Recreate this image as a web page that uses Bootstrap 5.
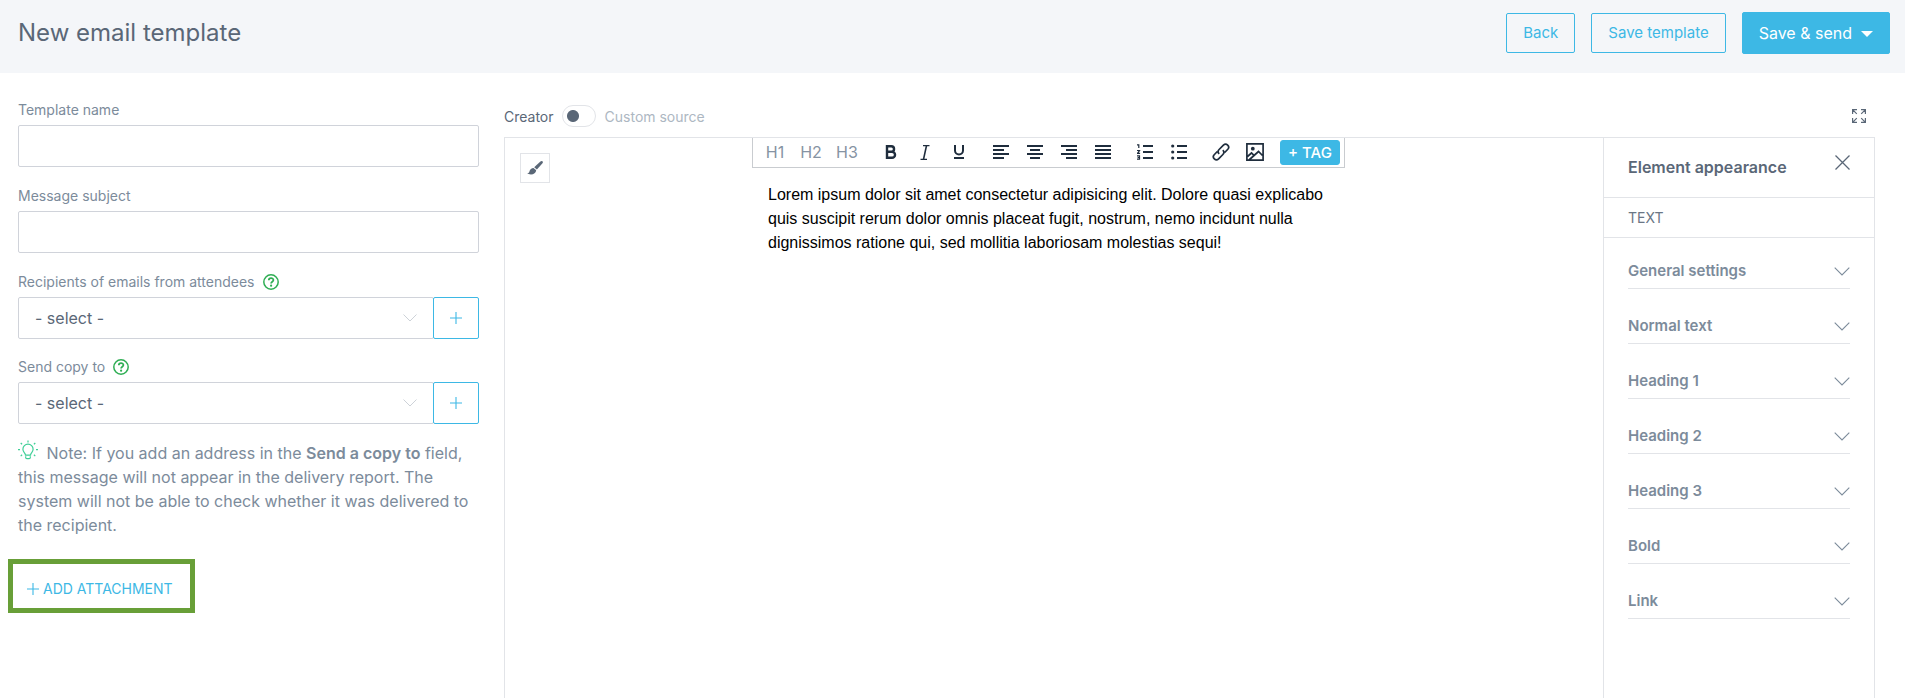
<!DOCTYPE html>
<html lang="en">
<head>
<meta charset="utf-8">
<meta name="viewport" content="width=device-width, initial-scale=1">
<title>New email template</title>
<link href="https://cdn.jsdelivr.net/npm/bootstrap@5.3.0/dist/css/bootstrap.min.css" rel="stylesheet">
<style>
:root { --blue: #3db8e5; --ink: #5a6777; --muted: #7c8b9b; --line: #e2e4e8; --field: #d0d3da; }
body { font-family: Inter, "Liberation Sans", sans-serif; font-size: 16px; line-height: 24px; color: var(--muted); background: #fff; }
svg { display: block; flex: none; }
.page-head { background: #f4f6f9; height: 73px; padding: 0 15px 7px 18px; }
.page-head h1 { font-size: 24px; line-height: 32px; color: var(--ink); font-weight: 400; }
.btn { --bs-btn-border-radius: 2px; --bs-btn-font-size: 15px; --bs-btn-line-height: 24px; --bs-btn-padding-y: 7px; --bs-btn-padding-x: 16px; }
.btn-line { --bs-btn-color: var(--blue); --bs-btn-border-color: var(--blue); --bs-btn-hover-color: #fff; --bs-btn-hover-bg: var(--blue); --bs-btn-hover-border-color: var(--blue); }
.btn-fill { --bs-btn-color: #fff; --bs-btn-bg: var(--blue); --bs-btn-border-color: var(--blue); --bs-btn-hover-color: #fff; --bs-btn-hover-bg: #2aa9d8; --bs-btn-padding-y: 8px; }
.btn-send { --bs-btn-font-size: 16px; }
.dropdown-toggle::after { border-width: 6px 6px 0; margin-left: 9px; vertical-align: 2px; }
.workspace { display: grid; grid-template-columns: minmax(0, 461fr) minmax(0, 1371fr); column-gap: 25px; padding: 25px 30px 0 18px; }
.field { margin-bottom: 17px; }
.field-select { margin-bottom: 16px; }
.form-label { font-size: 14px; line-height: 24px; margin-bottom: 3px; }
.form-control, .form-select { height: 42px; border-color: var(--field); border-radius: 2px; color: var(--ink); }
.form-select { padding: 0 36px 0 16px; background-size: 14px 8px; background-position: right 16px center;
  background-image: url("data:image/svg+xml,%3Csvg xmlns='http://www.w3.org/2000/svg' viewBox='0 0 14 8'%3E%3Cpath d='M.5.5 7 7 13.5.5' fill='none' stroke='%23cdd2d8'/%3E%3C/svg%3E"); }
.add-btn { width: 46px; flex: none; margin-left: -1px; --bs-btn-padding-x: 0px; --bs-btn-padding-y: 0px; }
.note { margin: 0 0 22px; }
.note svg { display: inline-block; vertical-align: -1px; margin-right: 4px; }
.note strong { font-weight: 600; }
.attach-frame { border: 5px solid #689f38; padding: 13px 17px 7px 14px; margin-left: -10px; vertical-align: top; }
.attach { color: var(--blue); font-size: 14px; }
.mode-bar { height: 39px; padding: 7px 9px 0 0; font-size: 14px; }
.mode-bar .form-check-input { width: 34px; height: 22px; margin: 0 9px 0 8px; border: 1px solid var(--line); border-radius: 11px; background: radial-gradient(circle at 10px 10px, var(--ink) 5.5px, transparent 6.5px) #fff; }
.creator { color: var(--ink); }
.custom-source { color: #adb7c2; }
.editor { border: 1px solid var(--line); border-bottom: 0; }
.canvas { padding-right: 11px; }
.brush { top: 15px; left: 15px; width: 30px; height: 30px; border: 1px solid var(--line); background: #fff; }
.mail { max-width: 593px; }
.tools { height: 30px; border: 1px solid #c9ccd0; border-top: 0; padding: 0 4px; }
.tools > div { margin-right: 8px; }
.tools button:not(.btn) { width: 34px; height: 28px; border: 0; background: none; padding: 0; color: #1f2d3d; }
.tools .heads { margin-right: 9px; }
.tools .heads button:not(.btn) { width: 36px; color: #8693a3; }
.tag-btn { --bs-btn-border-radius: 3px; --bs-btn-padding-y: 0px; --bs-btn-padding-x: 6px; --bs-btn-line-height: 23px; font-weight: 500; width: 60px; }
.mail p { font-family: "Liberation Sans", Arial, sans-serif; color: #000; padding: 15px 8px 0 16px; }
.side { width: 271px; border-left: 1px solid var(--line); flex: none; }
.side header { height: 60px; padding: 17px 24px 0; border-bottom: 1px solid var(--line); }
.side h2 { font-size: 16px; line-height: 24px; font-weight: 600; color: var(--ink); }
.kind { font-size: 14px; color: #6a7685; height: 40px; line-height: 40px; padding: 0 24px; border-bottom: 1px solid var(--line); }
.sections { padding: 12px 24px; }
.sections button { height: 55px; padding: 25px 0 5px; border: 0; border-bottom: 1px solid var(--line); border-radius: 0; background: none; color: var(--muted); font-size: 15px; font-weight: 600; line-height: 24px; }
.sections .sections-first { height: 39px; padding-top: 9px; }
</style>
</head>
<body>
<svg width="0" height="0" class="position-absolute" aria-hidden="true">
  <symbol id="help" viewBox="0 0 16 16"><circle cx="8" cy="8" r="7.2" fill="none" stroke="#2fae54" stroke-width="1.5"/><path d="M5.8 6.3C5.8 3.4 10.4 3.5 10.4 6.1 10.4 7.7 8.1 7.8 8.1 9.4" fill="none" stroke="#2fae54" stroke-width="1.8"/><circle cx="8.1" cy="11.7" r="1.1" fill="#2fae54"/></symbol>
  <symbol id="plus" viewBox="0 0 12 12"><path d="M0 6h12M6 0v12" fill="none" stroke="currentColor" stroke-width="1.1"/></symbol>
  <symbol id="chev" viewBox="0 0 16 9"><path d="M.7.7 8 8 15.3.7" fill="none" stroke="currentColor" stroke-width="1.1"/></symbol>
</svg>
<div class="d-flex flex-column min-vh-100">
  <header class="page-head d-flex align-items-center justify-content-between">
    <h1 class="m-0">New email template</h1>
    <div class="d-flex align-items-center gap-3">
      <a href="#" class="btn btn-line">Back</a>
      <button type="button" class="btn btn-line">Save template</button>
      <button type="button" class="btn btn-fill btn-send dropdown-toggle" data-bs-toggle="dropdown">Save &amp; send</button>
    </div>
  </header>

  <main class="workspace flex-grow-1">
    <form>
      <div class="field">
        <label class="form-label d-block" for="tpl">Template name</label>
        <input id="tpl" type="text" class="form-control">
      </div>
      <div class="field">
        <label class="form-label d-block" for="subject">Message subject</label>
        <input id="subject" type="text" class="form-control">
      </div>
      <div class="field-select">
        <label class="form-label d-flex align-items-center gap-2" for="recipients">Recipients of emails from attendees <svg width="16" height="16"><use href="#help"/></svg></label>
        <div class="d-flex">
          <select id="recipients" class="form-select"><option>- select -</option></select>
          <button type="button" class="btn btn-line add-btn d-flex align-items-center justify-content-center" aria-label="Add recipient"><svg width="12" height="12"><use href="#plus"/></svg></button>
        </div>
      </div>
      <div class="field-select">
        <label class="form-label d-flex align-items-center gap-2" for="copy">Send copy to <svg width="16" height="16"><use href="#help"/></svg></label>
        <div class="d-flex">
          <select id="copy" class="form-select"><option>- select -</option></select>
          <button type="button" class="btn btn-line add-btn d-flex align-items-center justify-content-center" aria-label="Add copy address"><svg width="12" height="12"><use href="#plus"/></svg></button>
        </div>
      </div>
      <p class="note"><svg width="20" height="20" viewBox="0 0 20 20" fill="none" stroke="#3fcf97" stroke-width="1.2"><path d="M7.5 15.2C7.5 12.7 4.9 12.3 4.9 9.3a5.1 5.1 0 0 1 10.2 0c0 3-2.6 3.4-2.6 5.9zM7.7 16.2v1.3c0 .8.5 1.2 1.1 1.2h2.4c.6 0 1.1-.4 1.1-1.2v-1.3M10 .4v2M0 9.6h2M18 9.6h2M2.7 3l1.4 1.3M17.3 3l-1.4 1.3M2.7 16.1l1.4-1.3M17.3 16.1l-1.4-1.3"/></svg> Note: If you add an address in the <strong>Send a copy to</strong> field, this message will not appear in the delivery report. The system will not be able to check whether it was delivered to the recipient.</p>
      <div class="attach-frame d-inline-block">
        <a href="#" class="attach d-flex align-items-center gap-1 text-decoration-none"><svg width="12" height="12"><use href="#plus"/></svg>ADD ATTACHMENT</a>
      </div>
    </form>

    <section class="d-flex flex-column">
      <div class="mode-bar d-flex align-items-start">
        <label for="mode" class="creator">Creator</label>
        <input id="mode" type="checkbox" class="form-check-input" role="switch">
        <label for="mode" class="custom-source">Custom source</label>
        <button type="button" class="border-0 bg-transparent p-0 ms-auto mt-1" aria-label="Full screen"><svg width="14" height="14" viewBox="0 0 14 14" fill="none" stroke="#5a6777" stroke-width="1.2"><path d="M.6 5V.6H5M9 .6h4.4V5M13.4 9v4.4H9M5 13.4H.6V9M.6.6l4.2 4.2M13.4.6 9.2 4.8M13.4 13.4 9.2 9.2M.6 13.4l4.2-4.2"/></svg></button>
      </div>
      <div class="editor d-flex flex-grow-1">
        <div class="canvas position-relative flex-grow-1">
          <button type="button" class="brush position-absolute p-0 d-flex align-items-center justify-content-center" aria-label="Page style"><svg width="16" height="14" viewBox="0 0 16 14" fill="#5a6777"><path d="M15.4.3c.7.6.6 1.4.1 2L9.9 8.5 7.2 6.3 13.4.6c.6-.5 1.4-.8 2-.3zM6.5 7 9.2 9.3C9 12 6.800 13.500 4 13.500 2.300 13.500.9 13 .2 12.300c1.300 0 2-.5 2.300-2C2.900 8.500 4.600 7 6.500 7z"/></svg></button>
          <div class="mail mx-auto">
            <div class="tools d-flex align-items-start" role="toolbar">
              <div class="heads d-flex"><button type="button">H1</button><button type="button">H2</button><button type="button">H3</button></div>
              <div class="d-flex">
                <button type="button" aria-label="Bold"><svg class="mx-auto" width="12" height="14" viewBox="0 0 12 14" fill="none" stroke="currentColor" stroke-width="2.400"><path d="M2 1.200h4.300a2.700 2.700 0 0 1 0 5.500H2zM2 6.700h5a3 3 0 0 1 0 6.100H2z"/></svg></button>
                <button type="button" aria-label="Italic"><svg class="mx-auto" width="10" height="15" viewBox="0 0 10 15" fill="none" stroke="currentColor"><path d="M3 .6h6.500M.5 14.400H7" stroke-width="1.100"/><path d="M6.500.6l-3 13.800" stroke-width="1.600"/></svg></button>
                <button type="button" aria-label="Underline"><svg class="mx-auto" width="12" height="14" viewBox="0 0 12 14" fill="none" stroke="currentColor" stroke-width="2"><path d="M2 0v5.500a4 4 0 0 0 8 0V0M1 13h10"/></svg></button>
              </div>
              <div class="d-flex">
                <button type="button" aria-label="Align left"><svg class="mx-auto" width="16" height="14" viewBox="0 0 16 14" stroke="currentColor" stroke-width="2"><path d="M0 1h16M0 5h11M0 9h16M0 13h11"/></svg></button>
                <button type="button" aria-label="Align centre"><svg class="mx-auto" width="16" height="14" viewBox="0 0 16 14" stroke="currentColor" stroke-width="2"><path d="M0 1h16M3 5h10M0 9h16M3 13h10"/></svg></button>
                <button type="button" aria-label="Align right"><svg class="mx-auto" width="16" height="14" viewBox="0 0 16 14" stroke="currentColor" stroke-width="2"><path d="M0 1h16M5 5h11M0 9h16M5 13h11"/></svg></button>
                <button type="button" aria-label="Justify"><svg class="mx-auto" width="16" height="14" viewBox="0 0 16 14" stroke="currentColor" stroke-width="2"><path d="M0 1h16M0 5h16M0 9h16M0 13h16"/></svg></button>
              </div>
              <div class="d-flex">
                <button type="button" aria-label="Numbered list"><svg class="mx-auto" width="16" height="16" viewBox="0 0 16 16" fill="none" stroke="currentColor"><path d="M6 2h10M6 8h10M6 14h10" stroke-width="2"/><path d="M0 .8h1.800V4M0 6.500h2.500L.6 9.300h2.500M0 11.900h2.500v3.300H0M.6 13.500h2" stroke-width="1.200"/></svg></button>
                <button type="button" aria-label="Bulleted list"><svg class="mx-auto" width="16" height="16" viewBox="0 0 16 16" fill="currentColor" stroke="none"><circle cx="1.700" cy="2" r="1.600"/><circle cx="1.700" cy="8" r="1.600"/><circle cx="1.700" cy="14" r="1.600"/><path d="M6 1h10v2H6zM6 7h10v2H6zM6 13h10v2H6z"/></svg></button>
              </div>
              <div class="d-flex">
                <button type="button" aria-label="Link"><svg class="mx-auto" width="18" height="18" viewBox="0 0 18 18" fill="none" stroke="currentColor" stroke-width="1.700"><path d="M7.200 10.900c-1.500-1.500-1.200-3.300-.1-4.400l4.300-4.400c2.900-2.700 7 1.200 4.400 4.200l-3.100 3.200M10.800 7.100c1.500 1.500 1.200 3.300.1 4.400l-4.300 4.400c-2.900 2.700-7-1.200-4.400-4.200l3.100-3.200"/></svg></button>
                <button type="button" aria-label="Image"><svg class="mx-auto" width="18" height="18" viewBox="0 0 18 18" fill="none" stroke="currentColor" stroke-width="1.700"><path d="M.9.9h16.200v16.200H.9zM1.500 13.500l4-3.500 3.200 3.200M3 17l9.500-8.500 4 4"/><circle cx="6.800" cy="5.700" r="1.900" fill="currentColor" stroke="none"/></svg></button>
              </div>
              <button type="button" class="btn btn-fill tag-btn mt-auto mb-auto">+ TAG</button>
            </div>
            <p class="m-0">Lorem ipsum dolor sit amet consectetur adipisicing elit. Dolore quasi explicabo quis suscipit rerum dolor omnis placeat fugit, nostrum, nemo incidunt nulla dignissimos ratione qui, sed mollitia laboriosam molestias sequi!</p>
          </div>
        </div>
        <aside class="side">
          <header class="d-flex align-items-start justify-content-between">
            <h2 class="m-0">Element appearance</h2>
            <button type="button" class="border-0 bg-transparent p-0" aria-label="Close"><svg width="15" height="15" viewBox="0 0 15 15" stroke="#5a6777" stroke-width="1.300"><path d="M.5.5l14 14M14.500.5l-14 14"/></svg></button>
          </header>
          <div class="kind">TEXT</div>
          <div class="sections">
            <button type="button" class="sections-first d-flex w-100 align-items-center justify-content-between">General settings<svg width="16" height="9"><use href="#chev"/></svg></button>
            <button type="button" class="d-flex w-100 align-items-center justify-content-between">Normal text<svg width="16" height="9"><use href="#chev"/></svg></button>
            <button type="button" class="d-flex w-100 align-items-center justify-content-between">Heading 1<svg width="16" height="9"><use href="#chev"/></svg></button>
            <button type="button" class="d-flex w-100 align-items-center justify-content-between">Heading 2<svg width="16" height="9"><use href="#chev"/></svg></button>
            <button type="button" class="d-flex w-100 align-items-center justify-content-between">Heading 3<svg width="16" height="9"><use href="#chev"/></svg></button>
            <button type="button" class="d-flex w-100 align-items-center justify-content-between">Bold<svg width="16" height="9"><use href="#chev"/></svg></button>
            <button type="button" class="d-flex w-100 align-items-center justify-content-between">Link<svg width="16" height="9"><use href="#chev"/></svg></button>
          </div>
        </aside>
      </div>
    </section>
  </main>
</div>
<script src="https://cdn.jsdelivr.net/npm/bootstrap@5.3.0/dist/js/bootstrap.bundle.min.js"></script>
</body>
</html>
